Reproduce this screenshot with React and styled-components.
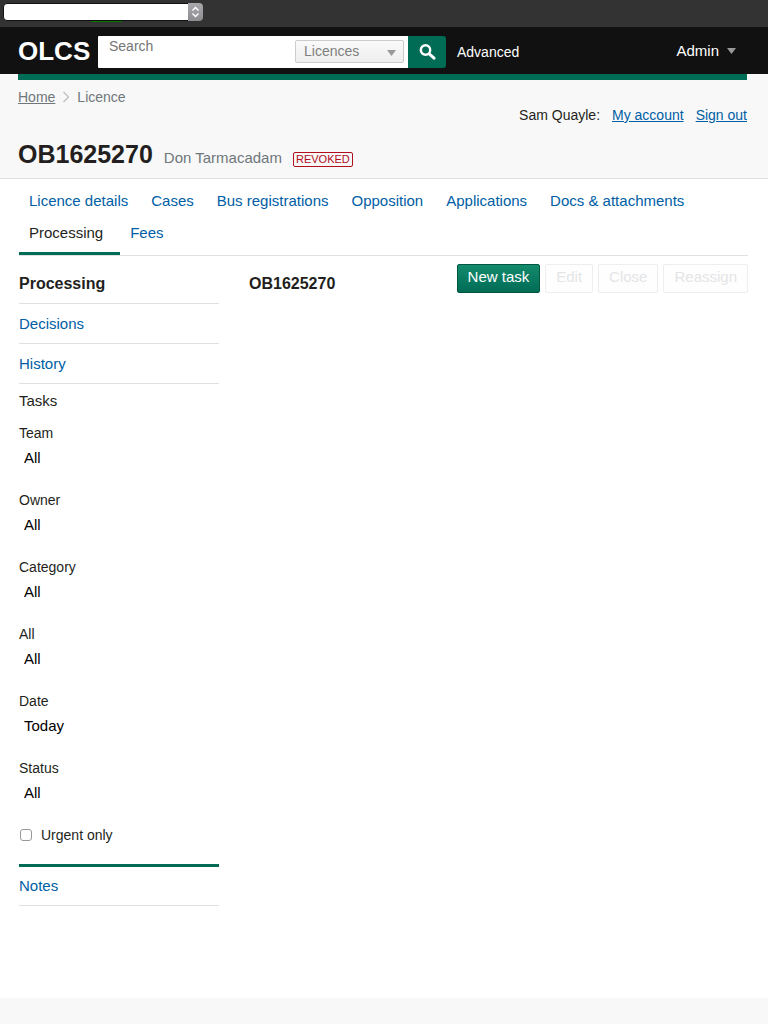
import React from "react";
import styled, { createGlobalStyle, css } from "styled-components";

const GREEN = "#006c56";
const LINK = "#005ea5";
const LINE = "#dee0e2";

const GlobalStyle = createGlobalStyle`
  *, *::before, *::after { box-sizing: border-box; }
  body {
    margin: 0;
    background: #f8f8f8;
    color: #231f20;
    font: 15px/20px "Liberation Sans", Arial, sans-serif;
  }
  h1, h2, p, ul { margin: 0; padding: 0; }
  ul { list-style: none; }
  button, input, select { font: inherit; margin: 0; }
`;

const Page = styled.div`
  display: flex;
  flex-direction: column;
  min-height: 100vh;
  padding-bottom: 26px;
`;

const DebugBar = styled.div`
  height: 27px;
  padding: 3px;
  background: #333;
`;

const DebugPicker = styled.div`
  display: flex;
  position: relative;
  width: 200px;
  height: 18px;
  border: 1px solid #111;
  border-radius: 4px;
  background: #fff;

  &::after {
    content: "";
    position: absolute;
    left: 87px;
    top: 17px;
    width: 31px;
    height: 1px;
    background: #007800;
  }
`;

const DebugSelect = styled.select`
  flex: 1;
  width: 100%;
  border: 0;
  border-radius: 4px;
  background: transparent;
  appearance: none;
`;

const Stepper = styled.svg`
  position: absolute;
  right: -1px;
  top: -1px;
  width: 15px;
  height: 18px;
  border-radius: 0 4px 4px 0;
  background: linear-gradient(#a9a9ad, #8c8c91);
  pointer-events: none;
`;

const Header = styled.header`
  display: flex;
  align-items: center;
  height: 47px;
  padding: 0 32px 0 18px;
  background: #111;
  color: #fff;
`;

const Logo = styled.a`
  width: 80px;
  color: #fff;
  font-size: 26px;
  line-height: 32px;
  font-weight: bold;
  text-decoration: none;
`;

const SearchForm = styled.form`
  display: flex;
  height: 32px;
  margin-top: 3px;
`;

const SearchBox = styled.div`
  display: flex;
  align-items: flex-start;
  width: 310px;
  padding-right: 4px;
  border-radius: 1px 0 0 1px;
  background: #fff;
`;

const SearchInput = styled.input`
  flex: 1;
  min-width: 0;
  height: 20px;
  padding: 0 11px;
  border: 0;
  outline: 0;
  background: transparent;
  font-size: 14px;
  &::placeholder { color: #757575; opacity: 1; }
`;

const IndexPicker = styled.div`
  position: relative;
  width: 109px;
  margin-top: 4px;
`;

const IndexSelect = styled.select`
  display: block;
  width: 100%;
  height: 23px;
  padding: 0 8px 2px;
  border: 1px solid #ccc;
  border-radius: 2px;
  background: linear-gradient(#fafafa, #eee);
  color: #808080;
  font-size: 14px;
  appearance: none;
`;

const Caret = styled.svg`
  width: 9px;
  height: 6px;
  fill: #999;
`;

const PickerCaret = styled(Caret)`
  position: absolute;
  right: 8px;
  top: 10px;
  pointer-events: none;
`;

const SearchButton = styled.button`
  display: flex;
  align-items: center;
  justify-content: center;
  width: 38px;
  padding: 0;
  border: 0;
  border-radius: 0 3px 3px 0;
  background: ${GREEN};
`;

const AdvancedLink = styled.a`
  margin: 3px auto 0 11px;
  color: #fff;
  font-size: 14px;
  text-decoration: none;
`;

const AdminMenu = styled.button`
  display: flex;
  align-items: center;
  gap: 8px;
  padding: 0;
  border: 0;
  background: none;
  color: #fff;
`;

const Rule = styled.div`
  height: 6px;
  margin: 0 21px 0 18px;
  background: ${GREEN};
`;

const SubHeader = styled.div`
  padding: 7px 21px 9px 18px;
  border-bottom: 1px solid ${LINE};
  font-size: 14px;
`;

const SubHeaderRow = styled.div`
  display: flex;
  justify-content: space-between;
`;

const Crumbs = styled.nav`
  display: flex;
  height: 20px;
  align-items: center;
  gap: 8px;
  color: #6f777b;
  a { color: inherit; }
`;

const Account = styled.div`
  display: flex;
  gap: 12px;
  padding-top: 18px;
  a { color: ${LINK}; }
`;

const TitleRow = styled.div`
  display: flex;
  align-items: baseline;
  gap: 11px;
  margin-top: 14px;
`;

const Title = styled.h1`
  font-size: 25px;
  line-height: 30px;
`;

const Organisation = styled.p`
  color: #6f777b;
  font-size: 15px;
`;

const Status = styled.span`
  padding: 0 2px;
  border: 1px solid #b10e1e;
  border-radius: 2px;
  color: #b10e1e;
  font-size: 11px;
  line-height: 13px;
`;

const Content = styled.div`
  flex: 1;
  padding: 6px 20px 92px 19px;
  background: #fff;
`;

const Tabs = styled.nav`
  display: flex;
  flex-wrap: wrap;
  align-items: flex-start;
  border-bottom: 1px solid ${LINE};
`;

const Tab = styled.a`
  padding: 6px 13px 6px 10px;
  color: ${LINK};
  text-decoration: none;
  ${(p) => p.$active && css`
    padding: 6px 17px 9px 10px;
    border-bottom: 3px solid ${GREEN};
    color: #231f20;
  `}
`;

const Columns = styled.div`
  display: flex;
  gap: 30px;
`;

const Sidebar = styled.aside`
  flex: 0 0 200px;
`;

const Heading = styled.h2`
  font-size: 16px;
  line-height: 20px;
`;

const SideHeading = styled(Heading)`
  padding: 18px 0 9px;
  border-bottom: 1px solid ${LINE};
`;

const SideItem = styled.li`
  padding: ${(p) => (p.$active ? "7px 0 19px" : "10px 0 9px")};
  border-bottom: ${(p) => (p.$active ? `3px solid ${GREEN}` : `1px solid ${LINE}`)};
  &:last-child { padding-top: 9px; }
`;

const SideLink = styled.a`
  display: block;
  color: ${(p) => (p.$active ? "#231f20" : LINK)};
  text-decoration: none;
`;

const Filters = styled.form`
  display: flex;
  flex-direction: column;
  gap: 22px;
  margin-top: 12px;
  font-size: 14px;
`;

const Field = styled.div`
  display: flex;
  flex-direction: column;
  gap: 5px;
`;

const FieldSelect = styled.select`
  height: 20px;
  padding: 0 5px;
  border: 0;
  background: transparent;
  color: #000;
  font-size: 15px;
  appearance: none;
`;

const CheckLabel = styled.label`
  display: flex;
  align-items: center;
  gap: 9px;
  padding-left: 1px;
`;

const CheckBox = styled.input`
  width: 12px;
  height: 12px;
  border: 1px solid #999;
  border-radius: 3px;
  background: #fff;
  appearance: none;
  &:checked { background: ${GREEN}; }
`;

const Main = styled.main`
  display: flex;
  flex: 1;
  align-items: flex-start;
  justify-content: space-between;
  min-width: 0;
  padding-top: 8px;
`;

const MainHeading = styled(Heading)`
  padding-top: 10px;
`;

const Actions = styled.div`
  display: flex;
  gap: 5px;
`;

const ActionButton = styled.button`
  padding: 2px 10px 5px;
  border: 1px solid ${(p) => (p.$primary ? "#00573f" : "#eee")};
  border-radius: 2px;
  background: ${(p) => (p.$primary ? "linear-gradient(#148a6c, #006c56)" : "#fefefe")};
  color: ${(p) => (p.$primary ? "#fff" : "#e4e5e6")};
`;

const tabs = ["Licence details", "Cases", "Bus registrations", "Opposition", "Applications", "Docs & attachments", "Processing", "Fees"];

const filters = [
  { id: "team", label: "Team", value: "All" },
  { id: "owner", label: "Owner", value: "All" },
  { id: "category", label: "Category", value: "All" },
  { id: "subcategory", label: "All", value: "All" },
  { id: "date", label: "Date", value: "Today" },
  { id: "status", label: "Status", value: "All" },
];

export default function App() {
  return (
    <Page>
      <GlobalStyle />
      <DebugBar>
        <DebugPicker>
          <DebugSelect aria-label="Page"><option value="" /></DebugSelect>
          <Stepper viewBox="0 0 15 18" fill="none" stroke="#fff" strokeWidth="1.5" aria-hidden="true">
            <path d="M4.5 7.5 7.5 4.5l3 3M4.5 10.5l3 3 3-3" />
          </Stepper>
        </DebugPicker>
      </DebugBar>

      <Header>
        <Logo href="#">OLCS</Logo>
        <SearchForm role="search" onSubmit={(e) => e.preventDefault()}>
          <SearchBox>
            <SearchInput type="text" aria-label="Search" placeholder="Search" />
            <IndexPicker>
              <IndexSelect aria-label="Search in"><option>Licences</option></IndexSelect>
              <PickerCaret viewBox="0 0 9 6" aria-hidden="true"><path d="M0 0h9L4.5 6z" /></PickerCaret>
            </IndexPicker>
          </SearchBox>
          <SearchButton type="submit" aria-label="Submit search">
            <svg width="17" height="17" viewBox="0 0 17 17" fill="none" stroke="#fff" aria-hidden="true">
              <circle cx="6.5" cy="6" r="4.7" strokeWidth="2.4" />
              <path d="M10.2 9.8 15 14.2" strokeWidth="3" strokeLinecap="round" />
            </svg>
          </SearchButton>
        </SearchForm>
        <AdvancedLink href="#">Advanced</AdvancedLink>
        <AdminMenu type="button">
          Admin
          <Caret viewBox="0 0 9 6" aria-hidden="true"><path d="M0 0h9L4.5 6z" /></Caret>
        </AdminMenu>
      </Header>
      <Rule />

      <SubHeader>
        <SubHeaderRow>
          <Crumbs aria-label="Breadcrumb">
            <a href="#">Home</a>
            <svg width="6" height="12" viewBox="0 0 6 12" fill="none" stroke="#bfc1c3" strokeWidth="1.4" aria-hidden="true">
              <path d="M0.5 1l5 5-5 5" />
            </svg>
            <span>Licence</span>
          </Crumbs>
          <Account>
            <span>Sam Quayle:</span>
            <a href="#">My account</a>
            <a href="#">Sign out</a>
          </Account>
        </SubHeaderRow>
        <TitleRow>
          <Title>OB1625270</Title>
          <Organisation>Don Tarmacadam</Organisation>
          <Status>REVOKED</Status>
        </TitleRow>
      </SubHeader>

      <Content>
        <Tabs>
          {tabs.map((name) => (
            <Tab key={name} href="#" $active={name === "Processing"}>{name}</Tab>
          ))}
        </Tabs>
        <Columns>
          <Sidebar>
            <SideHeading>Processing</SideHeading>
            <ul>
              <SideItem><SideLink href="#">Decisions</SideLink></SideItem>
              <SideItem><SideLink href="#">History</SideLink></SideItem>
              <SideItem $active>
                <SideLink href="#" $active>Tasks</SideLink>
                <Filters>
                  {filters.map(({ id, label, value }) => (
                    <Field key={id}>
                      <label htmlFor={id}>{label}</label>
                      <FieldSelect id={id}><option>{value}</option></FieldSelect>
                    </Field>
                  ))}
                  <CheckLabel>
                    <CheckBox type="checkbox" />
                    Urgent only
                  </CheckLabel>
                </Filters>
              </SideItem>
              <SideItem><SideLink href="#">Notes</SideLink></SideItem>
            </ul>
          </Sidebar>
          <Main>
            <MainHeading>OB1625270</MainHeading>
            <Actions>
              <ActionButton type="button" $primary>New task</ActionButton>
              <ActionButton type="button" disabled>Edit</ActionButton>
              <ActionButton type="button" disabled>Close</ActionButton>
              <ActionButton type="button" disabled>Reassign</ActionButton>
            </Actions>
          </Main>
        </Columns>
      </Content>
    </Page>
  );
}
